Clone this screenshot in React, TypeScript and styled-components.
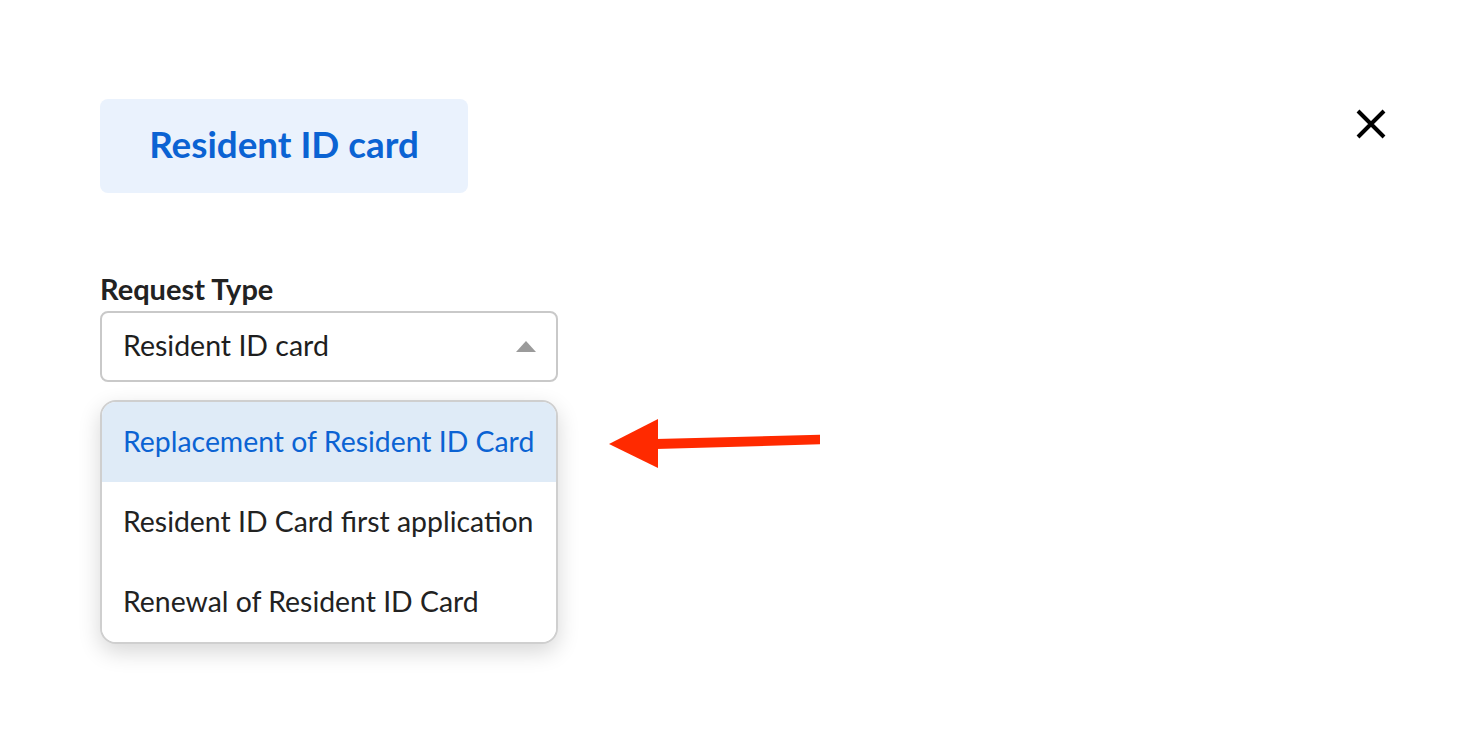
import React from "react";
import styled, { createGlobalStyle } from "styled-components";

const Global = createGlobalStyle`
  html, body { margin: 0; padding: 0; background: #ffffff; }
  body { font-family: Lato, "Noto Sans", sans-serif; color: #222222; }
`;

const Page = styled.div`
  width: 1482px;
  height: 754px;
  box-sizing: border-box;
  padding: 99px 96px 0 100px;
  overflow: hidden;
`;

const Header = styled.div`
  display: flex;
  justify-content: space-between;
  align-items: flex-start;
`;

const Tag = styled.div`
  box-sizing: border-box;
  width: 368px;
  height: 94px;
  padding-bottom: 5px;
  border-radius: 8px;
  background: #eaf2fd;
  color: #0b63d3;
  font-weight: 700;
  font-size: 36.8px;
  display: flex;
  align-items: center;
  justify-content: center;
`;

const CloseButton = styled.button`
  margin-top: 10px;
  width: 30px;
  height: 30px;
  padding: 0;
  border: 0;
  background: transparent;
  display: flex;
  align-items: center;
  justify-content: center;
`;

const Field = styled.div`
  margin-top: 78px;
  width: 458px;
  position: relative;
`;

const Label = styled.div`
  font-size: 29px;
  font-weight: 700;
  line-height: 36px;
  color: #222222;
  margin-bottom: 4px;
`;

const Select = styled.div`
  box-sizing: border-box;
  height: 71px;
  border: 2px solid #c9c9c9;
  border-radius: 8px;
  padding: 0 20px 3px 21px;
  display: flex;
  align-items: center;
  justify-content: space-between;
  font-size: 28.5px;
  color: #1e1e1e;
`;

const Caret = styled.span`
  margin-top: 3px;
  width: 0;
  height: 0;
  border-left: 10px solid transparent;
  border-right: 10px solid transparent;
  border-bottom: 11px solid #9b9b9b;
`;

const MenuWrap = styled.div`
  position: relative;
  margin-top: 18px;
`;

const Menu = styled.div`
  box-sizing: border-box;
  width: 458px;
  border: 2px solid #cfcfcf;
  border-radius: 16px;
  overflow: hidden;
  background: #ffffff;
  box-shadow: 0 8px 22px rgba(0, 0, 0, 0.16);
`;

const Option = styled.div<{ $active?: boolean }>`
  box-sizing: border-box;
  height: 80px;
  display: flex;
  align-items: center;
  padding: 0 0 3px 21px;
  font-size: 28.4px;
  background: ${(p) => (p.$active ? "#dfebf7" : "#ffffff")};
  color: ${(p) => (p.$active ? "#0b63d3" : "#222222")};
`;

const Pointer = styled.svg`
  position: absolute;
  left: 500px;
  top: 10px;
`;

export default function App() {
  return (
    <>
      <Global />
      <Page>
        <Header>
          <Tag>Resident ID card</Tag>
          <CloseButton aria-label="Close">
            <svg width="30" height="30" viewBox="0 0 30 30">
              <path d="M2 2 L28 28 M28 2 L2 28" stroke="#000" strokeWidth="4" />
            </svg>
          </CloseButton>
        </Header>
        <Field>
          <Label>Request Type</Label>
          <Select>
            <span>Resident ID card</span>
            <Caret />
          </Select>
          <MenuWrap>
            <Menu>
              <Option $active>Replacement of Resident ID Card</Option>
              <Option>Resident ID Card first application</Option>
              <Option>Renewal of Resident ID Card</Option>
            </Menu>
            <Pointer width="230" height="70" viewBox="0 0 230 70">
              <polygon points="56,29 220,24.7 220,34.3 56,39" fill="#ff2a00" />
              <polygon points="9,34 58,9 58,58" fill="#ff2a00" />
            </Pointer>
          </MenuWrap>
        </Field>
      </Page>
    </>
  );
}
